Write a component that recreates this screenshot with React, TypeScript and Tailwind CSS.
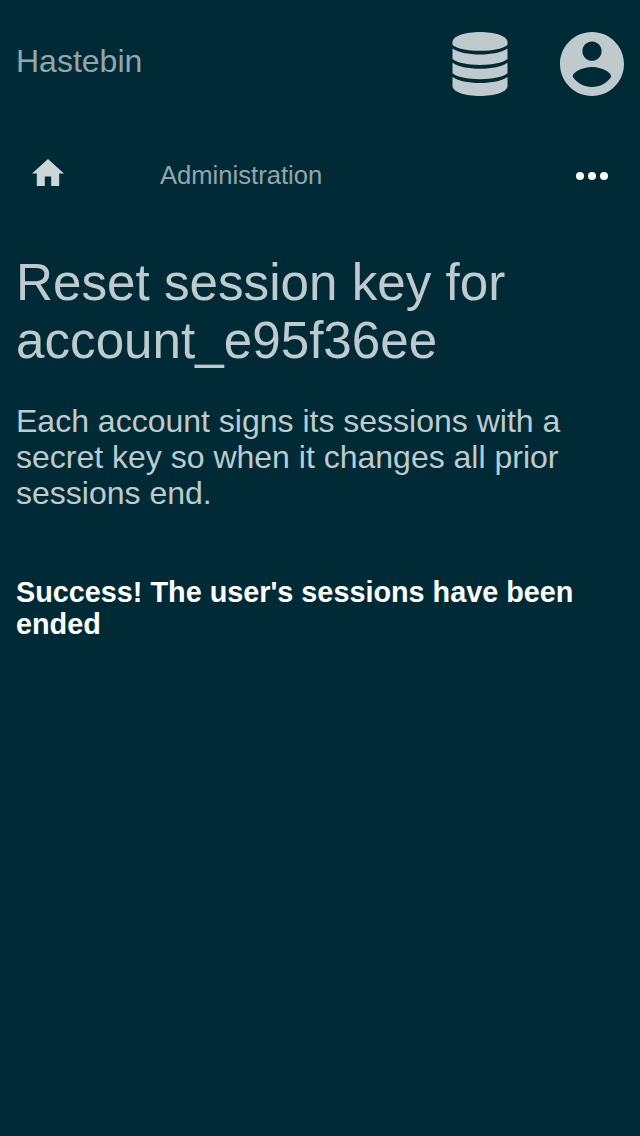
import React from "react";

function DatabaseIcon() {
  return (
    <svg className="h-16 w-16" viewBox="0 0 64 64" fill="currentColor" aria-hidden="true">
      <path d="M4.500 9.500C5.500 3.800 17.500 0 32 0S58.500 3.800 59.500 9.500v3.400C55 16.600 44.500 18.800 32 18.800S9 16.600 4.500 12.900z" />
      <path d="M4.500 16.500C9.500 20.200 20 22.500 32 22.500s22.500-2.300 27.500-6v10.600C55.500 30.700 44.500 33 32 33S8.500 30.700 4.500 27.100z" />
      <path d="M4.500 30.700C9.500 34.400 20 36.700 32 36.700s22.500-2.300 27.500-6v10.600C55.500 44.900 44.500 47.200 32 47.200S8.500 44.900 4.500 41.300z" />
      <path d="M4.500 44.900C9.500 48.600 20 50.900 32 50.900s22.500-2.300 27.500-6v9.600C58.500 60.200 46.500 64 32 64S5.500 60.200 4.500 54.500z" />
    </svg>
  );
}

function AccountIcon() {
  return (
    <svg className="h-16 w-16" viewBox="2 2 20 20" fill="currentColor" aria-hidden="true">
      <path d="M12 2C6.480 2 2 6.480 2 12s4.480 10 10 10 10-4.480 10-10S17.520 2 12 2zm0 3c1.660 0 3 1.340 3 3s-1.340 3-3 3-3-1.340-3-3 1.340-3 3-3zm0 14.200c-2.500 0-4.710-1.280-6-3.220.030-1.990 4-3.080 6-3.080 1.990 0 5.970 1.090 6 3.080-1.290 1.940-3.500 3.220-6 3.220z" />
    </svg>
  );
}

function HomeIcon() {
  return (
    <svg className="mb-[7px] h-[27.2px] w-8 text-[#ccd5d7]" viewBox="2 3 20 17" fill="currentColor" aria-hidden="true">
      <path d="M10 20v-6h4v6h5v-8h3L12 3 2 12h3v8z" />
    </svg>
  );
}

export default function App() {
  return (
    <div className="min-h-[1136px] bg-[#002b36] font-['Liberation_Sans',Arial,sans-serif] text-[#bfcacd]">
      <header className="flex h-32 items-center justify-between px-4">
        <a className="pb-1.5 text-[32px] leading-9 text-[#93a6ab]">Hastebin</a>
        <div className="flex items-center gap-12">
          <DatabaseIcon />
          <AccountIcon />
        </div>
      </header>
      <nav className="flex h-24 items-center px-8">
        <HomeIcon />
        <a className="ml-24 pb-0.5 text-[25.6px] text-[#93a6ab]">Administration</a>
        <svg className="ml-auto h-8 w-8 fill-white" viewBox="0 0 32 32" aria-label="More">
          <circle cx="4" cy="16" r="4" />
          <circle cx="16" cy="16" r="4" />
          <circle cx="28" cy="16" r="4" />
        </svg>
      </nav>
      <main className="px-4 pt-[30px]">
        <h1 className="text-[51.2px] leading-[58px]">
          Reset session key for
          <br />
          account_e95f36ee
        </h1>
        <p className="mt-[33px] text-[32px] leading-9">
          Each account signs its sessions with a secret key so when it changes all prior sessions end.
        </p>
        <p className="mt-[65px] text-[28.8px] leading-8 font-bold text-white">
          Success! The user's sessions have been ended
        </p>
      </main>
    </div>
  );
}
